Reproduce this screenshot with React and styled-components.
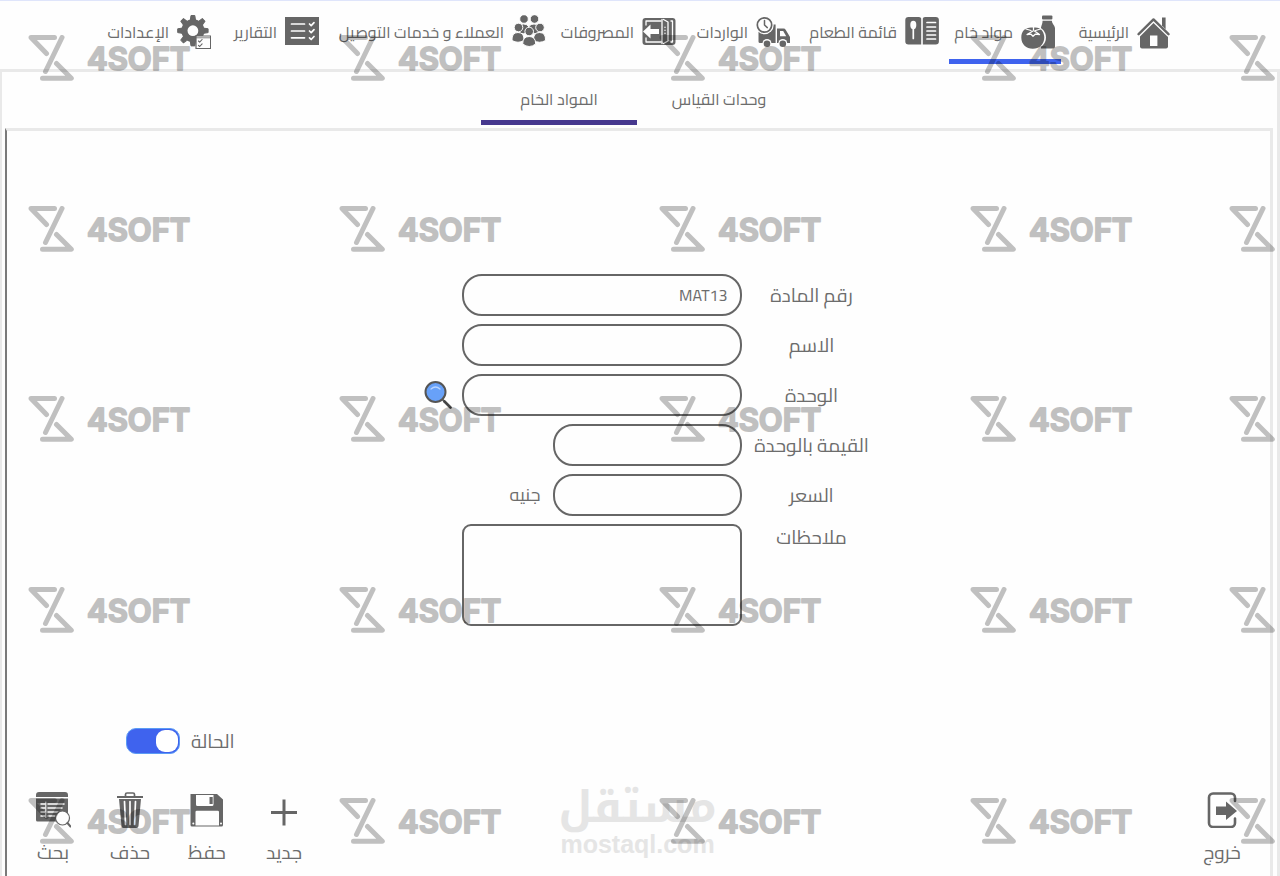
import React from 'react';
import styled, { createGlobalStyle } from 'styled-components';

const INK = '#666666';
const LINE = '#e9e9e9';
const BLUE = '#3f63ee';
const INDIGO = '#46388e';

const GlobalStyle = createGlobalStyle`
  * { box-sizing: border-box; }
  body {
    margin: 0;
    background: #fefefe;
    color: #6c6c6c;
    font-family: Cairo, "Noto Sans", "DejaVu Sans", sans-serif;
    font-size: 16px;
  }
  button, input, textarea { font: inherit; color: inherit; }
`;

const Page = styled.div`
  position: relative;
  display: flex;
  flex-direction: column;
  min-height: 100vh;
  overflow: hidden;
  border-top: 1px solid #dfe5fb;
`;

const NavBar = styled.nav`
  display: flex;
  justify-content: center;
  gap: 4px;
  padding-bottom: 5px;
`;

const NavItem = styled.a`
  display: flex;
  align-items: center;
  gap: 8px;
  width: ${(p) => p.$width}px;
  height: 63px;
  padding-top: 4px;
  padding-inline-start: 6px;
  border-bottom: 5px solid ${(p) => (p.$active ? BLUE : 'transparent')};
  color: inherit;
  line-height: 28px;
  text-decoration: none;
  white-space: nowrap;
`;

const Shell = styled.div`
  flex: 1;
  display: flex;
  flex-direction: column;
  border: 3px solid ${LINE};
  border-bottom: 0;
  border-left-width: 2px;
  padding: 0 4px 0 3px;
`;

const Tabs = styled.div`
  display: flex;
  justify-content: center;
  gap: 4px;
  padding-bottom: 3px;
`;

const Tab = styled.button`
  width: 156px;
  height: 53px;
  padding: 5px 0 0;
  border: 0;
  border-bottom: 5px solid ${(p) => (p.$active ? INDIGO : 'transparent')};
  background: none;
  cursor: pointer;
`;

const Panel = styled.main`
  flex: 1;
  display: flex;
  flex-direction: column;
  border: 3px solid ${LINE};
  border-bottom: 0;
  border-left: 2px solid #7a7a7a;
  padding-top: 143px;
`;

const Form = styled.form`
  display: flex;
  flex-direction: column;
  gap: 8px;
  align-self: center;
  padding-left: 18px;
`;

const Row = styled.div`
  display: grid;
  grid-template-columns: 120px 280px 28px;
  column-gap: 10px;
  align-items: ${(p) => (p.$top ? 'start' : 'center')};
`;

const Label = styled.label`
  font-size: 19px;
  line-height: 26px;
  text-align: center;
  white-space: nowrap;
`;

const Cell = styled.div`
  display: flex;
  align-items: center;
  gap: 12px;
`;

const Currency = styled.span`
  font-size: 18px;
  line-height: 26px;
`;

const TextBox = styled.input`
  flex: none;
  width: ${(p) => (p.$short ? 189 : 280)}px;
  height: 42px;
  padding: 0 12px;
  border: 2px solid ${INK};
  border-radius: 20px;
  background: transparent;
  outline: none;
`;

const Notes = styled.textarea`
  display: block;
  width: 280px;
  height: 102px;
  padding: 8px 12px;
  border: 2px solid ${INK};
  border-radius: 9px;
  background: transparent;
  resize: none;
  outline: none;
`;

const IconButton = styled.button`
  display: flex;
  padding: 0;
  border: 0;
  background: none;
  cursor: pointer;
`;

const Status = styled.div`
  display: flex;
  justify-content: flex-end;
  align-items: center;
  gap: 11px;
  margin-top: auto;
  padding-left: 119px;
  padding-bottom: 32px;
`;

const Toggle = styled.input`
  appearance: none;
  display: flex;
  align-items: center;
  width: 54px;
  height: 26px;
  margin: 0;
  padding: 0 1px;
  border: 1px solid #5b9bf5;
  border-radius: 10px;
  background: ${BLUE};
  cursor: pointer;

  &::before {
    content: '';
    width: 22px;
    height: 22px;
    border-radius: 9px;
    background: #fff;
  }
  &:not(:checked) { justify-content: flex-end; background: #bbb; }
`;

const Footer = styled.footer`
  display: grid;
  grid-template-columns: 1fr auto 1fr;
  align-items: start;
  padding: 0 18px 8px 16px;
`;

const Actions = styled.div`
  display: flex;
  justify-content: ${(p) => (p.$end ? 'flex-end' : 'flex-start')};
  gap: 17px;
  padding-top: 6px;
`;

const Action = styled.button`
  display: flex;
  flex-direction: column;
  align-items: center;
  gap: 8px;
  width: 60px;
  padding: 0;
  border: 0;
  background: none;
  font-size: 19px;
  line-height: 32px;
  cursor: pointer;
`;

const Brand = styled.div`
  display: flex;
  flex-direction: column;
  align-items: center;
  width: 156px;
  color: #e5e5e5;
  font-weight: 700;
`;

const BrandName = styled.span`
  height: 46px;
  font-family: "Noto Kufi Arabic", Cairo, sans-serif;
  font-size: 44px;
  line-height: 44px;
  white-space: nowrap;
`;

const BrandSite = styled.span`
  font-family: "Liberation Sans", sans-serif;
  font-size: 25px;
  line-height: 24px;
`;

const Watermark = styled.div`
  position: absolute;
  inset: 0;
  direction: ltr;
  display: grid;
  grid-template-columns: 311px 320px 311px 259px 180px;
  grid-template-rows: 171px 190px 191px 211px 46px;
  padding: 34px 0 0 28px;
  overflow: hidden;
  opacity: 0.24;
  pointer-events: none;
`;

const Svg = styled.svg`
  display: block;
  flex: none;
  fill: ${INK};
`;

const W = { fill: 'none', stroke: '#fefefe', strokeLinecap: 'round', strokeLinejoin: 'round' };
const D = { fill: 'none', stroke: INK, strokeLinecap: 'round', strokeLinejoin: 'round' };

const Icon = ({ size = 34, children }) => (
  <Svg width={size} height={size} viewBox={`0 0 ${size} ${size}`} aria-hidden="true">{children}</Svg>
);

const HomeIcon = () => (
  <Icon>
    <path d="M25 2.500h3.600v11.700L25 10.600z" />
    <path d="M1.600 19.200 16.500 4.400l15 14.800" {...D} strokeWidth="2.400" />
    <path d="M16.500 8 31 22v9.500a2 2 0 0 1-2 2H5a2 2 0 0 1-2-2V21.500z" />
    <path d="M13 20.500h7.400V31H13z" fill="#fefefe" />
  </Icon>
);

const RawIcon = () => (
  <Icon>
    <rect x="21" y="0.500" width="10.400" height="4" rx="1" />
    <path d="M21.600 5.800h9.200c.2 3 2.800 4.400 3.200 7.200v18.500a2 2 0 0 1-2 2H20V12.500c.6-2.500 1.500-3.900 1.600-6.700z" />
    <ellipse cx="11.800" cy="22.400" rx="13.200" ry="12" fill="#fefefe" />
    <path d="M12 12.600c7.500-1.300 11.300 4 11.300 9.600 0 7-5 11.500-11.500 11.500S.3 29.500.3 22.500 5 11.800 12 12.600z" />
    <path d="M12.500 11v4M5 14l5 1.500M19.500 14l-5 1.500M12 16l-6 3.500 4-.3 2 2 2.200-2 4.300.3-5-3.500" {...W} strokeWidth="1.300" />
  </Icon>
);

const MenuIcon = () => (
  <Icon>
    <path d="M3.500 2H14q2 0 2.200 1.500v26H3.500q-3.200 0-3.200-3V5q0-3 3.200-3zM30.700 2H20q-2 0-2.200 1.500v26h12.900q3.200 0 3.200-3V5q0-3-3.200-3z" />
    <ellipse cx="8.300" cy="10" rx="3" ry="4.200" fill="#fefefe" />
    <path d="M8.300 12v11.500M22 7.500h8.500M22 12h8.500M22 16h8.500M22 20h8.500M22 24h8.500" {...W} strokeWidth="1.700" />
  </Icon>
);

const TruckIcon = () => (
  <Icon>
    <path d="M2.500 15V26.500a1.500 1.500 0 0 0 1.500 1.500h15.600V9.500H14zM21 13.500h6.500q1.500 0 2.300 1.400L34 22v6H21z" />
    <path d="M24 16h3.200l3 5.200H24z" fill="#fefefe" />
    <circle cx="8.500" cy="10" r="9.200" fill="#fefefe" />
    <circle cx="8.500" cy="10" r="7.200" {...D} strokeWidth="1.700" />
    <path d="M8.500 5.500V10l2.800 2.600" {...D} strokeWidth="1.500" />
    <circle cx="11" cy="28.500" r="4.500" fill="#fefefe" />
    <circle cx="26.800" cy="28.500" r="4.500" fill="#fefefe" />
    <circle cx="11" cy="28.800" r="3.300" />
    <circle cx="26.800" cy="28.800" r="3.300" />
  </Icon>
);

const ExpenseIcon = () => (
  <Icon>
    <rect x="0.500" y="3" width="33" height="27" rx="3" />
    <path d="M4 10V6h15M4 23v4h15" {...W} strokeWidth="1.300" />
    <path d="M1 16.500 8.500 9.500V14H17v5H8.500v4.500z" fill="#fefefe" />
    <path d="M20 4.500V28.500M21.500 4.500 26 7v19l-4.500 2.500M29 6h1.500v21H29" {...W} strokeWidth="1.300" />
    <path d="M23 12v9" {...W} strokeWidth="1.200" strokeDasharray="0.500 2.500" />
  </Icon>
);

const Person = ({ x, y, big }) => (
  <g transform={`translate(${x} ${y})`}>
    <path d={big ? 'M-6.500 12.500q0-7.500 6.500-7.500t6.500 7.500q-6.500 5-13 0z' : 'M-6.500 13q-.5-8 6-8t6 8q-6 3.500-12 0z'} stroke="#fefefe" strokeWidth="1" />
    <circle r="4.300" stroke="#fefefe" strokeWidth="1" />
  </g>
);

const PeopleIcon = () => (
  <Icon>
    <Person x={12} y={4} />
    <Person x={22.500} y={4} />
    <Person x={6.500} y={12.500} />
    <Person x={28} y={12.500} />
    <Person x={17.200} y={16.500} big />
  </Icon>
);

const ReportIcon = () => (
  <Icon>
    <path d="M0 2h34v28H0z" />
    <path d="M6.500 9h13M6.500 16h13M6.500 22.800h13M24.500 9l1.700 1.700 2.800-3M24.500 16l1.700 1.700 2.800-3M24.500 22.800l1.700 1.700 2.800-3" {...W} strokeWidth="1.700" />
  </Icon>
);

const GearIcon = () => (
  <Icon>
    {[0, 45, 90, 135, 180, 225, 270, 315].map((a) => (
      <path key={a} d="M13.300 5 14 0.500h3.800l.7 4.500z" transform={`rotate(${a} 15.900 15.700)`} stroke={INK} strokeWidth="1" strokeLinejoin="round" />
    ))}
    <circle cx="15.900" cy="15.700" r="11.500" />
    <circle cx="15.900" cy="15.700" r="5.400" fill="#fefefe" />
    <path d="M19 21h14.600v12.500H19z" fill="#fefefe" stroke={INK} strokeWidth="1.200" />
    <path d="M19 22.800h14.500" {...D} strokeWidth="0.800" />
    <path d="m21.500 26 1.200 1.200 2.400-2.700M21.500 30.300l1.200 1.200 2.400-2.700" {...D} strokeWidth="1.100" />
  </Icon>
);

const MagnifierIcon = () => (
  <Icon size={28}>
    <path d="m18 18 2.500 2.500" {...D} strokeWidth="2" />
    <path d="m20.500 20.500 6 6" stroke="#444" strokeWidth="2.600" strokeLinecap="round" />
    <circle cx="11.500" cy="11" r="10" fill="#68a1f8" stroke="#555" strokeWidth="2" />
    <path d="M7 8q4.500-4 9 0" fill="none" stroke="#b9d5ff" strokeWidth="1.200" strokeLinecap="round" />
  </Icon>
);

const ExitIcon = () => (
  <Icon size={36}>
    <path d="M31 9V5.500a4 4 0 0 0-4-4H9a4 4 0 0 0-4 4V31a4 4 0 0 0 4 4h18a4 4 0 0 0 4-4v-4.500" {...D} strokeWidth="2.600" />
    <path d="M12 14.500h10V9.500L33 19 22 28v-5H12z" />
  </Icon>
);

const PlusIcon = () => (
  <Icon size={36}>
    <path d="M18 7.500v26M5 20.500h26" stroke={INK} strokeWidth="3" />
  </Icon>
);

const SaveIcon = () => (
  <Icon size={36}>
    <path d="M1.500 2H28l6 5.500V33a1.500 1.500 0 0 1-1.500 1.500H3A1.500 1.500 0 0 1 1.500 33z" />
    <path d="M7 3h17.500v9.500q0 1.500-1.500 1.500H8.500Q7 14 7 12.500zM6.500 20q0-1.300 1.300-1.300h20.900Q30 18.700 30 20v13.500H6.500z" fill="#fefefe" />
    <path d="M20.500 5h3.200v7h-3.200z" />
    <circle cx="4.300" cy="31.500" r="1" fill="#fefefe" />
    <circle cx="32" cy="31.500" r="1" fill="#fefefe" />
  </Icon>
);

const TrashIcon = () => (
  <Icon size={36}>
    <path d="M13.500 4V2.500q0-1.500 1.500-1.500h6q1.500 0 1.500 1.500V4" {...D} strokeWidth="1.700" />
    <path d="M5 4h26v2H5zM7 7h22l-2.500 27q-.2 2-2 2h-13q-1.800 0-2-2z" />
    <path d="m12.500 9.500 1 23M18 9.500v23M23.500 9.500l-1 23" {...W} strokeWidth="1.700" />
  </Icon>
);

const SearchListIcon = () => (
  <Icon size={36}>
    <path d="M1 3q0-3 3-3h26q3 0 3 3v2H1zM1 6.500h32V28q0 1.500-1.500 1.500h-29Q1 29.500 1 28z" />
    <path d="M6 12h4M13 12h16M6 16h4M13 16h14M6 20h4M13 20h10M6 24h4M13 24h7" {...W} strokeWidth="1.500" />
    <path d="M10.800 10v15.500" {...W} strokeWidth="1" />
    <circle cx="27.500" cy="26" r="7" fill="#fefefe" stroke={INK} strokeWidth="1.200" />
    <path d="m32.500 31 3 3.500" {...D} strokeWidth="2" />
  </Icon>
);

const Mark = ({ compact }) => (
  <svg width="180" height="46" viewBox="0 0 180 46" aria-hidden="true">
    <g fill="none" stroke="#000" strokeWidth="5" strokeLinecap="round" strokeLinejoin="round">
      <path d="M26.500 2.500H3l15.500 16M34 2.500 17.500 36.500M28.500 28.500l14.800 14.800H14.500" />
    </g>
    {!compact && (
      <text x="59" y="35" fontFamily='Inter, "Noto Sans", sans-serif' fontWeight="600" fontSize="31" stroke="#000" strokeWidth="2" strokeLinejoin="round">4SOFT</text>
    )}
  </svg>
);

const NAV = [
  { text: 'الرئيسية', icon: HomeIcon, width: 112 },
  { text: 'مواد خام', icon: RawIcon, width: 112, active: true },
  { text: 'قائمة الطعام', icon: MenuIcon, width: 145 },
  { text: 'الواردات', icon: TruckIcon, width: 110 },
  { text: 'المصروفات', icon: ExpenseIcon, width: 126 },
  { text: 'العملاء و خدمات التوصيل', icon: PeopleIcon, width: 223 },
  { text: 'التقارير', icon: ReportIcon, width: 104 },
  { text: 'الإعدادات', icon: GearIcon, width: 114 },
];

const ACTIONS = [
  { text: 'جديد', icon: PlusIcon },
  { text: 'حفظ', icon: SaveIcon },
  { text: 'حذف', icon: TrashIcon },
  { text: 'بحث', icon: SearchListIcon },
];

export default function App() {
  return (
    <Page dir="rtl">
      <GlobalStyle />
      <NavBar>
        {NAV.map(({ text, icon: Glyph, width, active }) => (
          <NavItem key={text} href="#" $active={active} $width={width} aria-current={active ? 'page' : undefined}>
            <Glyph />
            {text}
          </NavItem>
        ))}
      </NavBar>
      <Shell>
        <Tabs>
          <Tab type="button">وحدات القياس</Tab>
          <Tab type="button" $active>المواد الخام</Tab>
        </Tabs>
        <Panel>
          <Form>
            <Row>
              <Label htmlFor="code">رقم المادة</Label>
              <TextBox id="code" defaultValue="MAT13" />
            </Row>
            <Row>
              <Label htmlFor="name">الاسم</Label>
              <TextBox id="name" />
            </Row>
            <Row>
              <Label htmlFor="unit">الوحدة</Label>
              <TextBox id="unit" />
              <IconButton type="button" aria-label="بحث"><MagnifierIcon /></IconButton>
            </Row>
            <Row>
              <Label htmlFor="amount">القيمة بالوحدة</Label>
              <TextBox id="amount" $short />
            </Row>
            <Row>
              <Label htmlFor="price">السعر</Label>
              <Cell>
                <TextBox id="price" $short />
                <Currency>جنيه</Currency>
              </Cell>
            </Row>
            <Row $top>
              <Label htmlFor="notes">ملاحظات</Label>
              <Notes id="notes" />
            </Row>
          </Form>
          <Status>
            <Label htmlFor="status">الحالة</Label>
            <Toggle type="checkbox" id="status" defaultChecked />
          </Status>
          <Footer>
            <Actions>
              <Action type="button"><ExitIcon />خروج</Action>
            </Actions>
            <Brand>
              <BrandName>مستقل</BrandName>
              <BrandSite>mostaql.com</BrandSite>
            </Brand>
            <Actions $end>
              {ACTIONS.map(({ text, icon: Glyph }) => (
                <Action key={text} type="button"><Glyph />{text}</Action>
              ))}
            </Actions>
          </Footer>
        </Panel>
      </Shell>
      <Watermark>
        {Array.from({ length: 25 }, (_, i) => <Mark key={i} compact={i % 5 === 4} />)}
      </Watermark>
    </Page>
  );
}
